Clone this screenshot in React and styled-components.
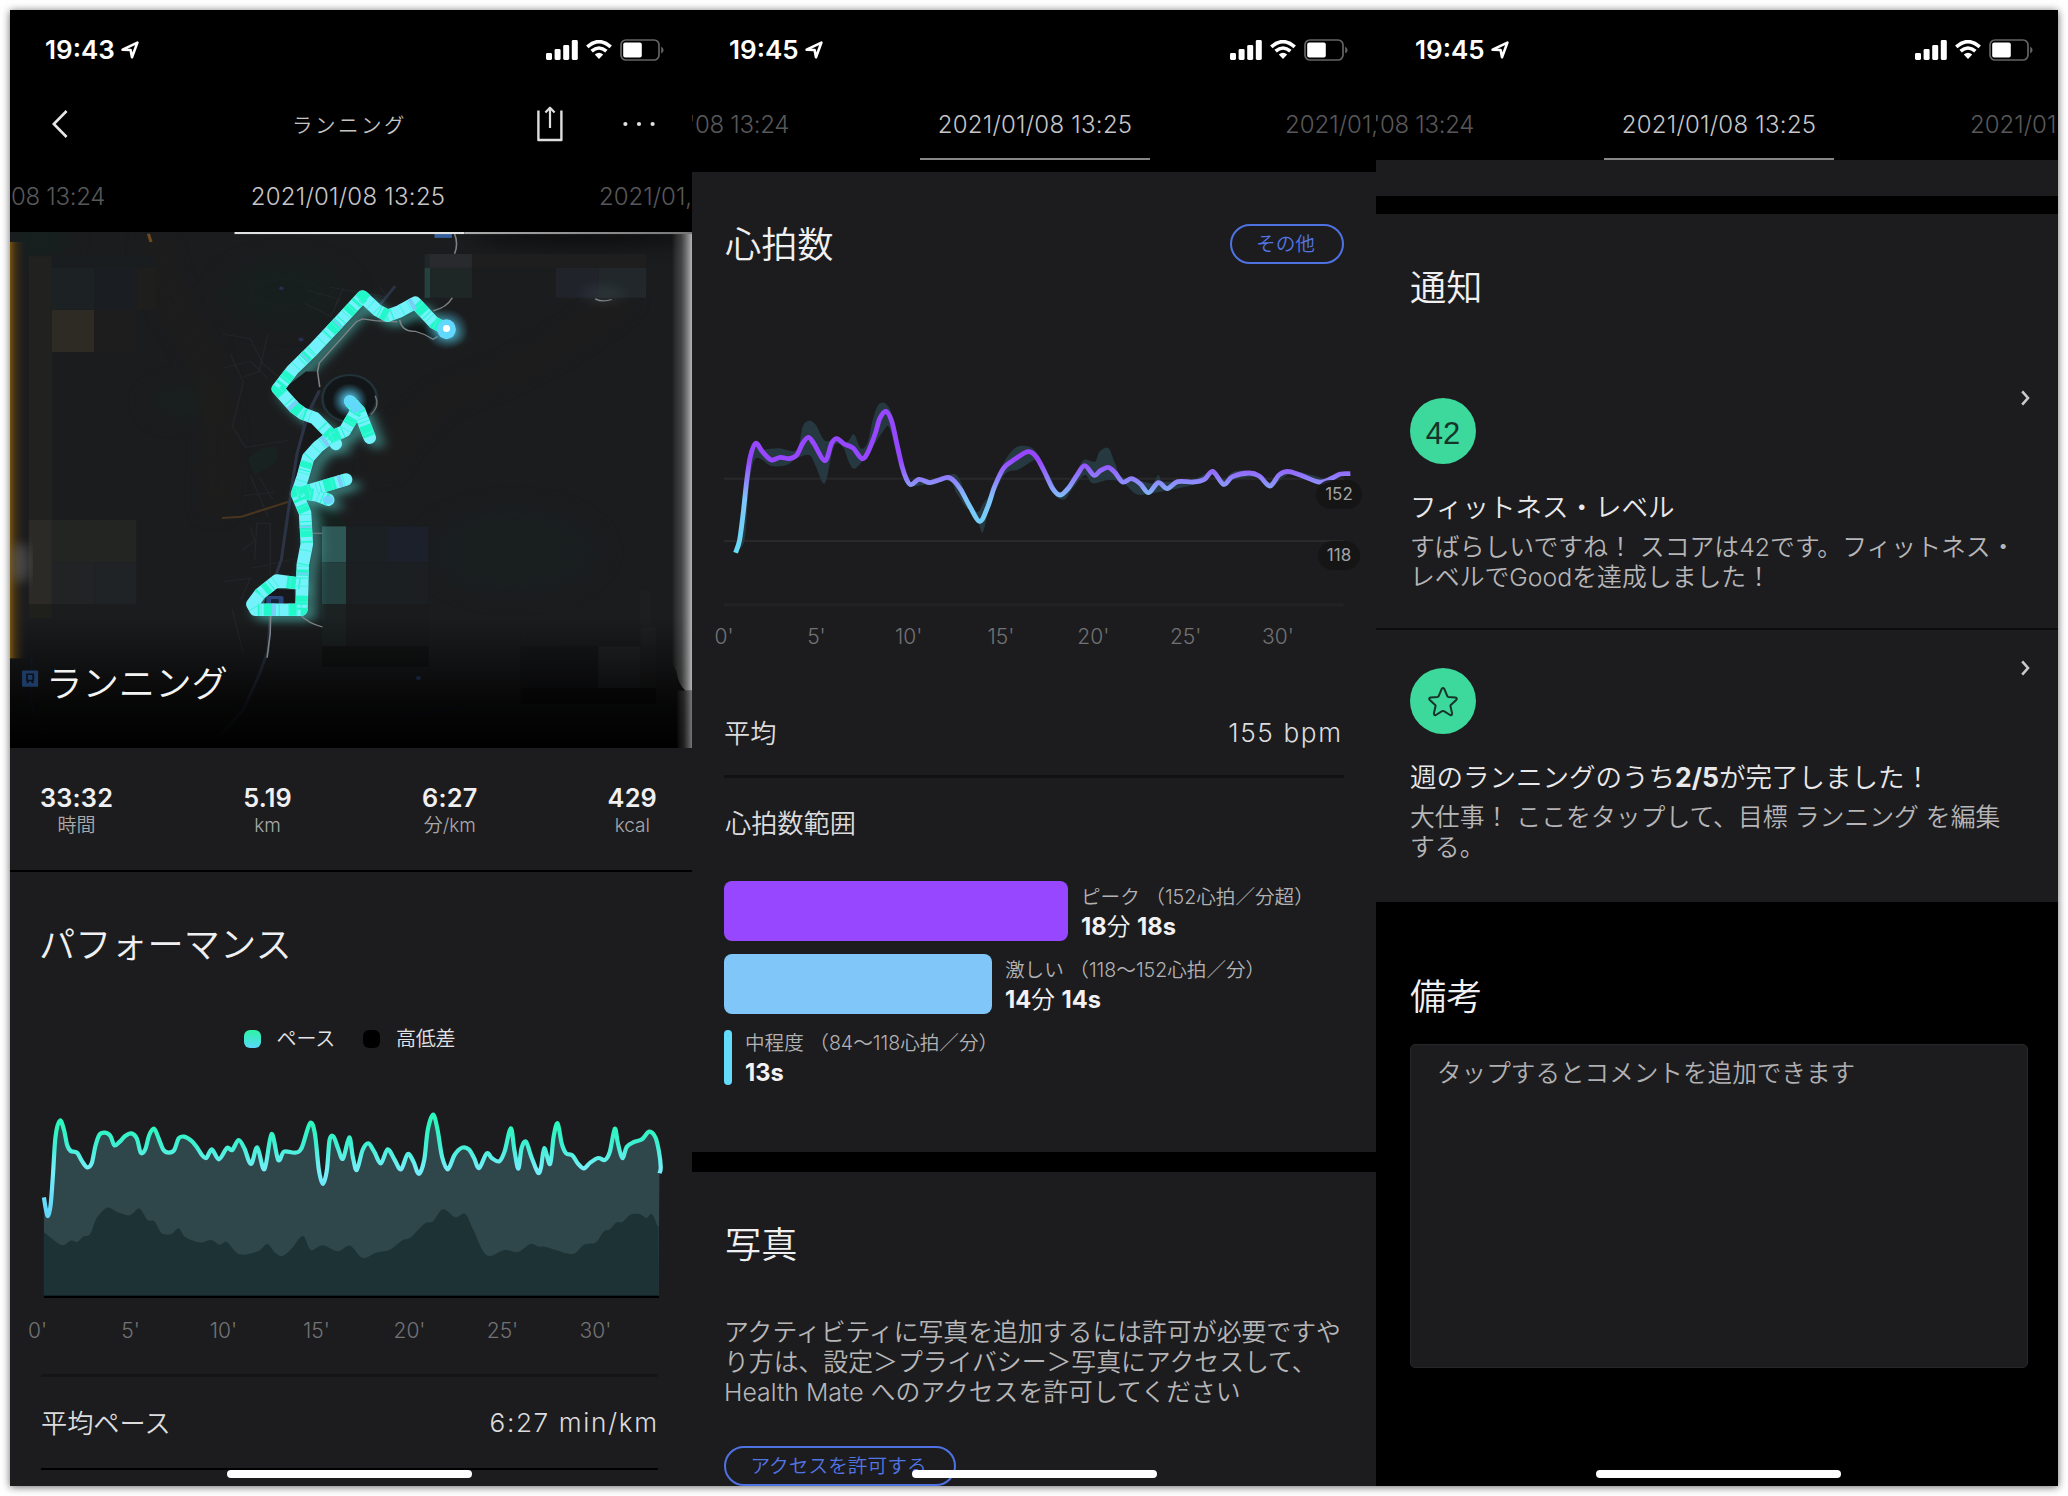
import React from "react";
import styled, { createGlobalStyle } from "styled-components";

const GlobalStyle = createGlobalStyle`
  * { box-sizing: border-box; }
  body {
    margin: 0;
    background: #fff;
    font-family: Inter, "Noto Sans CJK JP", sans-serif;
    font-weight: 350;
    color: #e9e9eb;
    -webkit-font-smoothing: antialiased;
  }
  p, h2, h3 { margin: 0; font-weight: inherit; }
`;

const Board = styled.main`
  display: flex;
  width: 2048px;
  height: 1476px;
  margin: 10px;
  background: #000;
  box-shadow: 0 1px 8px rgba(0, 0, 0, 0.6);
`;

const Screen = styled.section`
  position: relative;
  display: flex;
  flex-direction: column;
  width: ${(p) => p.$width}px;
  height: 1476px;
  overflow: hidden;
  background: #000;
`;

const StatusBar = styled.header`
  display: flex;
  flex: none;
  align-items: center;
  justify-content: space-between;
  height: 79px;
  padding: 0 ${(p) => p.$right}px 0 ${(p) => p.$left}px;
`;

const StatusGroup = styled.div`
  display: flex;
  align-items: center;
  gap: ${(p) => p.$gap}px;
`;

const Clock = styled.span`
  font-size: 26px;
  font-weight: 600;
  color: #fff;
`;

const NavBar = styled.nav`
  display: grid;
  grid-template-columns: 1fr auto 1fr;
  flex: none;
  align-items: center;
  height: 69px;
  padding: 0 37px 0 42px;
`;

const NavTitle = styled.span`
  margin-right: 8px;
  font-size: 20.5px;
  letter-spacing: 2.5px;
  color: #c4c4c4;
`;

const NavActions = styled.div`
  display: flex;
  align-items: center;
  justify-content: flex-end;
  gap: 60px;
`;

const TabRow = styled.div`
  display: flex;
  flex: none;
  height: 71px;
  margin-top: ${(p) => p.$offset || 0}px;
  line-height: 72px;
  font-size: 24px;
  white-space: nowrap;
  color: #58585a;
`;

const PreviousTab = styled.span`
  display: flex;
  flex: none;
  justify-content: flex-end;
  width: ${(p) => p.$width}px;
  letter-spacing: -0.3px;
`;

const CurrentTab = styled.span`
  flex: none;
  width: 230px;
  margin: 0 ${(p) => p.$after}px 0 ${(p) => p.$before}px;
  text-align: center;
  letter-spacing: 0.25px;
  color: #c6c6c8;
  box-shadow: ${(p) => (p.$underlined ? "inset 0 -2px #868688" : "none")};
`;

const NextTab = styled.span`
  flex: 1;
  min-width: 0;
`;

const MapArea = styled.div`
  position: relative;
  flex: none;
  height: 516px;
  background: #1b1c1e;
`;

const MapTitle = styled.h2`
  position: absolute;
  left: 36px;
  top: 428px;
  font-size: 36.4px;
  line-height: 48px;
  color: #f4f4f4;
`;

const Stats = styled.div`
  display: flex;
  flex: none;
  justify-content: space-between;
  height: 124px;
  padding: 35px 35px 0 30px;
  background: #1c1c1e;
  border-bottom: 2px solid #000;
`;

const Stat = styled.div`
  display: flex;
  flex-direction: column;
  align-items: center;
`;

const StatValue = styled.span`
  font-size: 25.3px;
  font-weight: 600;
  letter-spacing: 0.2px;
  line-height: 30px;
  color: #f0f0f2;
`;

const StatLabel = styled.span`
  font-size: 19px;
  line-height: 26px;
  color: #a9a9ab;
`;

const Section = styled.div`
  display: flex;
  flex-direction: column;
  flex: none;
  height: ${(p) => p.$height}px;
  padding: ${(p) => p.$pad};
  background: #1c1c1e;
`;

const SectionTitle = styled.h2`
  padding-top: 1px;
  margin: 0 0 -1px ${(p) => p.$shift || 0}px;
  font-size: 36.2px;
  line-height: 48px;
  color: #f0f0f2;
`;

const Legend = styled.div`
  display: flex;
  align-items: center;
  justify-content: center;
  gap: 28px;
  height: 24px;
  margin: 59px 34px 0 0;
`;

const LegendItem = styled.span`
  display: flex;
  align-items: center;
  gap: 16px;
  font-size: 20px;
  letter-spacing: -0.2px;
  line-height: 22px;
  color: #e4e4e6;
`;

const Swatch = styled.i`
  width: 17px;
  height: 18px;
  border-radius: 6px;
  background: ${(p) => p.$fill};
`;

const PaceChart = styled.svg`
  display: block;
  flex: none;
  width: 682px;
  height: 188px;
  margin: 59px 0 0 -31px;
`;

const AxisLabels = styled.div`
  display: grid;
  grid-template-columns: repeat(7, ${(p) => p.$pitch}px);
  flex: none;
  height: 24px;
  margin: ${(p) => p.$margin};
  font-size: 21px;
  line-height: 25px;
  text-align: center;
  color: #727274;
`;

const Divider = styled.hr`
  flex: none;
  width: 617px;
  height: 3px;
  margin: 32px 0 0;
  border: 0;
  background: #151516;
`;

const ValueRow = styled.div`
  display: flex;
  flex: none;
  align-items: center;
  justify-content: space-between;
  width: ${(p) => p.$width}px;
  height: ${(p) => p.$height}px;
  margin-top: ${(p) => p.$top || 0}px;
  padding: 0 ${(p) => p.$inset || 0}px 1px 0;
  border-bottom: ${(p) => p.$rule};
  font-size: 26.2px;
  color: #dcdcde;
`;

const Measure = styled.span`
  margin-right: -1.6px;
  letter-spacing: 1.6px;
`;

const HomeIndicator = styled.span`
  position: absolute;
  left: ${(p) => p.$left}px;
  bottom: 8px;
  width: 245px;
  height: 8px;
  border-radius: 4px;
  background: #fff;
`;

const HeadingRow = styled.div`
  display: flex;
  flex: none;
  align-items: center;
  justify-content: space-between;
  height: 40px;
`;

const PillButton = styled.button`
  flex: none;
  width: ${(p) => p.$width}px;
  height: 40px;
  margin-top: ${(p) => p.$top || 0}px;
  padding: 0 3px 0 0;
  border: 2px solid #4f72e2;
  border-radius: 20px;
  background: transparent;
  font: inherit;
  font-size: 19.7px;
  line-height: 36px;
  color: #5375e4;
`;

const HeartChartBox = styled.div`
  position: relative;
  flex: none;
  width: 652px;
  height: 210px;
  margin-top: 136px;
`;

const HeartChart = styled.svg`
  display: block;
  width: 652px;
  height: 210px;
`;

const ThresholdBadge = styled.span`
  position: absolute;
  left: ${(p) => 615 - p.$width / 2}px;
  top: ${(p) => p.$top}px;
  width: ${(p) => p.$width}px;
  height: 29px;
  border-radius: 15px;
  background: rgba(20, 20, 20, 0.86);
  font-size: 17px;
  font-weight: 400;
  line-height: 29px;
  text-align: center;
  color: #a3a3a5;
`;

const SubTitle = styled.h3`
  flex: none;
  margin: 28px 0 0 1px;
  font-size: 26.2px;
  line-height: 36px;
  color: #dcdcde;
`;

const ZoneList = styled.div`
  display: flex;
  flex-direction: column;
  gap: 13px;
  margin-top: 39px;
`;

const ZoneRow = styled.div`
  display: flex;
  align-items: center;
  gap: 13px;
  height: 60px;
`;

const ZoneBar = styled.i`
  flex: none;
  width: ${(p) => p.$width}px;
  height: ${(p) => p.$height}px;
  border-radius: ${(p) => p.$radius}px;
  background: ${(p) => p.$fill};
`;

const ZoneLabel = styled.p`
  font-size: 19.6px;
  line-height: 32px;
  white-space: nowrap;
  color: #b2b2b4;
`;

const ZoneTime = styled.p`
  font-size: 23.7px;
  line-height: 28px;
  white-space: nowrap;
  color: #f2f2f4;

  b { font-weight: 700; }
`;

const Band = styled.div`
  flex: none;
  height: ${(p) => p.$height}px;
  background: ${(p) => p.$fill || "#000"};
`;

const Paragraph = styled.p`
  flex: none;
  margin-top: ${(p) => p.$top}px;
  font-size: 24.85px;
  line-height: 30px;
  white-space: nowrap;
  color: #b6b6b8;
`;

const NoticeStack = styled.div`
  display: flex;
  flex-direction: column;
  margin-top: 49px;
`;

const NoticeCard = styled.article`
  display: flex;
  flex-direction: column;
  flex: none;
  height: ${(p) => p.$height}px;
  padding: 38px 28px 0 34px;
  border-bottom: ${(p) => (p.$ruled ? "2px solid #0c0c0d" : "0")};
`;

const NoticeHead = styled.div`
  display: flex;
  justify-content: space-between;
  align-items: flex-start;

  > svg { margin-top: -8px; }
`;

const NoticeBadge = styled.span`
  display: flex;
  align-items: center;
  justify-content: center;
  width: 66px;
  height: 66px;
  padding-top: ${(p) => p.$drop}px;
  border-radius: 50%;
  background: #3dd89b;
  font-family: "Liberation Sans", Arial, sans-serif;
  font-size: 31px;
  font-weight: 400;
  color: #17342a;
`;

const NoticeTitle = styled.h3`
  margin-top: 25px;
  font-size: 26.5px;
  line-height: 36px;
  white-space: nowrap;
  color: #e9e9eb;

  b { font-weight: 700; }
`;

const NotesTitle = styled(SectionTitle)`
  margin: 70px 0 -1px 34px;
`;

const NotesBox = styled.div`
  width: 618px;
  height: 324px;
  margin: 24px 0 0 34px;
  padding: 12px 26px;
  border: 1px solid #262628;
  border-radius: 5px;
  background: #1c1c1e;
  font-size: 24.6px;
  line-height: 32px;
  color: #b0b0b2;
`;

/* Catmull-Rom interpolation through a flat "x,y x,y" list. */
function smooth(list) {
  const p = list.trim().split(/\s+/).map((s) => s.split(",").map(Number));
  let d = `M${p[0][0]},${p[0][1]}`;
  for (let i = 0; i < p.length - 1; i += 1) {
    const a = p[i - 1] || p[i];
    const b = p[i];
    const c = p[i + 1];
    const e = p[i + 2] || c;
    const k = 6.2;
    d += `C${(b[0] + (c[0] - a[0]) / k).toFixed(1)},${(b[1] + (c[1] - a[1]) / k).toFixed(1)} ${(c[0] - (e[0] - b[0]) / k).toFixed(1)},${(c[1] - (e[1] - b[1]) / k).toFixed(1)} ${c[0]},${c[1]}`;
  }
  return d;
}

const PACE = smooth(`98,352 102,385 107,408 113,375 118,290 124,170 134,122 143,150 150,195 158,213 172,218 184,245 195,262
205,250 213,200 222,165 235,158 247,168 256,196 268,185 280,168 294,160 306,175 315,218 325,208 334,165 345,146 355,175
366,210 378,218 390,210 400,175 412,170 428,182 440,200 452,225 462,234 474,208 490,238 508,204 520,210 534,180 547,205
562,252 576,202 592,268 608,162 623,240 636,215 660,218 675,205 694,130 705,160 714,270 723,312 732,270 738,180 747,170
757,205 768,236 782,172 790,230 799,270 812,210 825,190 838,215 853,250 868,208 884,240 898,268 913,222 926,245 938,282
950,240 958,150 970,104 980,150 990,230 1003,268 1018,225 1035,203 1050,208 1062,235 1073,264 1090,220 1102,235 1118,244
1130,215 1144,145 1152,210 1161,266 1168,205 1178,185 1190,230 1205,278 1212,260 1219,204 1232,252 1240,170 1249,130
1258,190 1268,220 1282,226 1294,250 1308,265 1322,248 1340,234 1355,240 1366,215 1377,146 1384,190 1394,234 1404,200
1420,186 1438,178 1454,155 1468,172 1476,215 1480,262 1477,280`);

const ELEVATION = smooth(`98,456 120,480 140,496 158,482 172,486 186,470 202,462 216,415 240,383 262,396 290,406 312,386
330,420 345,424 362,460 384,462 400,445 415,472 448,488 472,480 492,494 508,486 536,523 578,514 598,492 616,518 632,528
652,508 678,468 696,510 722,496 756,514 784,497 812,534 842,518 872,510 900,482 920,472 950,432 970,424 992,388 1020,412
1042,402 1060,450 1090,526 1130,510 1160,516 1188,492 1206,500 1220,500 1250,512 1284,522 1308,494 1334,488 1352,455
1366,448 1380,428 1394,426 1412,404 1432,402 1448,414 1460,402 1472,436 1475,440`);

const HEART = smooth(`125,578 134,540 142,460 150,360 158,290 170,250 185,275 205,300 225,292 245,296 262,285 275,250
288,232 300,250 325,302 340,250 352,236 368,252 388,264 408,296 422,275 438,220 448,175 462,154 475,185 486,250 498,320
508,358 518,374 536,358 560,368 580,360 600,352 614,362 630,390 650,440 672,484 690,440 705,380 725,325 750,298 780,275
798,290 815,330 835,385 852,405 870,385 890,345 907,317 928,346 942,332 960,322 975,338 992,366 1012,356 1032,372
1050,398 1072,368 1092,386 1115,365 1150,366 1175,358 1194,334 1218,373 1238,350 1275,339 1298,348 1322,378 1342,345
1362,334 1390,345 1432,366 1460,355 1480,342 1502,341`);

const HEART_RANGE = smooth(`125,575 150,330 165,248 185,268 222,265 262,270 275,200 290,182 305,195 325,242 352,236 375,245
390,223 405,265 420,250 432,180 445,134 462,132 478,175 500,320 518,370 600,345 622,348 640,400 665,455 680,430 705,380
725,310 750,265 775,258 798,275 830,350 852,400 885,345 905,300 930,305 940,275 960,264 975,310 990,350 1040,365
1060,370 1072,345 1085,365 1150,358 1194,332 1218,358 1240,335 1275,333 1300,345 1322,365 1362,332 1440,355 1440,375
1400,358 1362,345 1322,382 1300,352 1240,360 1218,380 1194,345 1150,374 1095,390 1050,402 1022,402 992,368 960,360
925,370 907,345 880,385 862,418 840,405 815,340 798,300 760,328 730,340 705,400 690,460 678,518 665,475 640,440 620,400
600,362 518,378 495,330 470,205 455,215 430,265 395,324 380,310 365,260 345,260 325,370 305,320 290,285 262,295 240,315
205,318 170,295 155,380 145,540 125,575`);

const ROUTE =
  "M1000,317 L972,298 L930,240 L895,265 L868,278 L845,262 L812,222 L760,295 L700,378 L655,435 L622,490 L660,545 L678,562 L705,575 L735,615 L752,650" +
  " M785,528 L805,555 L828,632 M797,556 L772,612 L738,632 L712,658 L690,690 L678,745 L665,795 L683,850 L687,940 L678,1000 L675,1131 L572,1131 L565,1115 L582,1085 L620,1046 L672,1055" +
  " M665,795 L775,753 M668,790 L712,800 L735,812";

const BLOCKS = [
  [64, 105, 52, 765, "#21221f"], [64, 1115, 52, 42, "#1f1f1c"], [116, 105, 232, 33, "#191d1f"], [116, 138, 95, 123, "#1c2123"],
  [211, 138, 94, 123, "#1a1d22"], [116, 261, 95, 122, "#2e2a24"], [305, 138, 44, 123, "#1e1e1d"], [211, 261, 94, 122, "#1d1d1d"],
  [64, 870, 52, 245, "#2c2a26"], [116, 870, 189, 123, "#232523"], [116, 993, 95, 122, "#212325"], [211, 993, 94, 122, "#202325"],
  [951, 99, 106, 127, "#1f2726"], [962, 99, 95, 40, "#292a2d"], [951, 139, 12, 87, "#22413f"], [1057, 99, 390, 40, "#1e1e1e"],
  [1245, 139, 95, 87, "#20232a"], [1340, 139, 107, 87, "#21272a"],
  [721, 889, 54, 104, "#2e5856"], [775, 889, 94, 104, "#1b2023"], [869, 889, 90, 104, "#1c202a"],
  [721, 993, 54, 122, "#233f3e"], [775, 993, 184, 122, "#1b1f21"], [721, 1115, 54, 122, "#1b2221"], [775, 1115, 184, 122, "#191b1d"],
  [721, 1237, 239, 60, "#131415"], [1228, 1115, 206, 122, "#1a1c1e"], [1166, 1180, 80, 57, "#1a1d1e"], [1434, 1075, 26, 104, "#1d1e20"],
  [1434, 1180, 35, 57, "#1f2022"], [1166, 1237, 174, 121, "#17181a"], [1340, 1237, 94, 121, "#222325"], [1434, 1237, 35, 121, "#1e1f21"],
  [1166, 1358, 303, 46, "#101010"],
];

function StreetMap() {
  return (
    <svg width="682" height="516" viewBox="22 35 1528 1497" preserveAspectRatio="none" display="block">
      <defs>
        <linearGradient id="fade" x1="0" y1="0" x2="0" y2="1">
          <stop offset="0" stopColor="#000" stopOpacity="0" />
          <stop offset="0.32" stopColor="#000" stopOpacity="0.35" />
          <stop offset="0.65" stopColor="#000" stopOpacity="0.75" />
          <stop offset="1" stopColor="#000" />
        </linearGradient>
        <linearGradient id="amber">
          <stop offset="0" stopColor="#76530f" />
          <stop offset="0.3" stopColor="#4a3613" stopOpacity="0.8" />
          <stop offset="1" stopColor="#1b1c1e" stopOpacity="0" />
        </linearGradient>
        <linearGradient id="edge">
          <stop offset="0" stopColor="#aaa" stopOpacity="0" />
          <stop offset="0.45" stopColor="#888" stopOpacity="0.35" />
          <stop offset="1" stopColor="#b4b4b4" />
        </linearGradient>
        <linearGradient id="topline">
          <stop offset="0" stopColor="#aaa" />
          <stop offset="1" stopColor="#777" />
        </linearGradient>
        <radialGradient id="halo">
          <stop offset="0" stopColor="#5fd9ff" />
          <stop offset="0.45" stopColor="#4fb8da" stopOpacity="0.65" />
          <stop offset="1" stopColor="#3a8aa8" stopOpacity="0" />
        </radialGradient>
        <filter id="soft" x="-20%" y="-20%" width="140%" height="140%" colorInterpolationFilters="sRGB">
          <feGaussianBlur stdDeviation="14" />
        </filter>
        <filter id="wide" x="-50%" y="-50%" width="200%" height="200%" colorInterpolationFilters="sRGB">
          <feGaussianBlur stdDeviation="28" />
        </filter>
      </defs>
      <rect x="22" y="35" width="1528" height="1497" fill="#1b1c1e" />
      <g filter="url(#wide)" opacity="0.8">
        <ellipse cx="640" cy="210" rx="140" ry="100" fill="#17201e" />
        <ellipse cx="90" cy="60" rx="60" ry="40" fill="#13231f" />
        <path d="M345,60 Q370,230 430,340 Q510,480 480,850" stroke="#241f19" strokeWidth="28" fill="none" />
        <path d="M1400,230 Q1200,430 1000,510 Q900,600 850,730" stroke="#221e19" strokeWidth="28" fill="none" />
        <ellipse cx="400" cy="530" rx="60" ry="50" fill="#18201f" />
        <ellipse cx="1150" cy="960" rx="190" ry="130" fill="#191f20" />
        <ellipse cx="1310" cy="45" rx="260" ry="25" fill="#060606" />
      </g>
      {BLOCKS.map(([x, y, w, h, fill]) => (
        <rect key={`${x}-${y}-${w}`} x={x} y={y} width={w} height={h} fill={fill} />
      ))}
      <g fill="none" stroke="#232528" strokeWidth="3">
        <path d="M497,330 L560,345 L590,420 L640,470 M515,390 L545,470 L520,600 L550,660 L645,640 M600,330 L580,440 L545,455 M497,430 L560,410 L600,460" />
        <path d="M560,740 L600,860 M580,745 L610,810 M545,800 L615,790 M540,960 L570,930 L560,890 M565,1010 L655,985 M500,1050 L560,1040 L540,1100 M520,1130 L545,1260 M570,985 L575,880 L605,880 L605,1030" />
        <path d="M690,205 L760,230 L740,280 L680,240 M740,195 L870,225 L850,195 M770,195 L750,250 M800,200 L850,250" />
      </g>
      <path d="M555,690 L590,660 L622,658 L620,700 L570,742 Z" fill="#182321" />
      <path d="M697,820 L735,822 L775,885 L720,889 L697,915 Z" fill="#15211f" />
      <path d="M497,865 L540,861 L645,818" fill="none" stroke="#49341f" strokeWidth="6" />
      <path d="M332,40 L338,64" stroke="#704a1f" strokeWidth="7" />
      <path d="M885,192 L845,255 M715,495 L690,560 L665,680 L645,850 L630,985 L618,1030 M605,1145 L600,1250 L580,1320 L545,1420 L490,1500" fill="none" stroke="#2b3345" strokeWidth="7" />
      <path d="M70,1270 L70,1400 Q75,1460 110,1500" fill="none" stroke="#182336" strokeWidth="5" />
      <path d="M885,285 L925,250 L980,335 L965,345 L935,325 L905,318 Z" fill="#0f1112" />
      <path d="M880,1460 Q930,1425 1038,1415" fill="none" stroke="#161c2c" strokeWidth="6" />
      <rect x="22" y="1150" width="1528" height="382" fill="url(#fade)" />
      <ellipse cx="1352" cy="215" rx="45" ry="28" fill="#53606a" opacity="0.2" filter="url(#soft)" />
      <rect x="22" y="64" width="38" height="1208" fill="url(#amber)" />
      <ellipse cx="45" cy="995" rx="20" ry="60" fill="#777" opacity="0.5" filter="url(#soft)" />
      <circle cx="937" cy="1329" r="6" fill="#152039" />
      <circle cx="630" cy="198" r="5" fill="#242f52" />
      <circle cx="674" cy="347" r="6" fill="#242f52" />
      <rect x="49" y="1307" width="36" height="47" rx="2" fill="#1d3a63" />
      <path d="M60,1318 h14 v18 h-14 z M60,1344 l4,-7 M74,1344 l-4,-7" fill="none" stroke="#0b111c" strokeWidth="4" />
      <path d={ROUTE} transform="translate(16 18)" fill="none" stroke="#4cb9b2" strokeWidth="26" strokeLinecap="round" strokeLinejoin="round" opacity="0.75" filter="url(#soft)" />
      <path d="M636,488 L685,440 L712,440 L716,485 L690,565 L662,540 Z M690,580 L662,690 L655,770 L668,770 L676,700 L725,625 L704,585 Z" fill="#16181a" />
      <path d="M600,1070 L660,1072 L660,1118 L590,1118 Z" fill="#16181b" />
      <path d="M715,495 L690,560 L665,680 L650,800" fill="none" stroke="#2b3345" strokeWidth="7" />
      <ellipse cx="783" cy="518" rx="61" ry="68" fill="#131618" stroke="#223238" strokeWidth="6" />
      <path d="M840,510 Q852,540 830,565" fill="none" stroke="#6b7072" strokeWidth="3" />
      <path d="M1018,40 Q1027,70 1018,98 M1013,226 Q1000,255 970,264 M890,296 L840,292 L812,287 L798,295 L715,415 L711,440 L716,485 M895,290 Q900,325 930,323 Q950,330 970,346 L980,338 M700,909 L722,909 M610,1145 L672,1145 Q690,1170 722,1181 M606,1145 L605,1200 L598,1270 M1333,229 Q1350,240 1370,231" fill="none" stroke="#7d8284" strokeWidth="3.5" />
      <ellipse cx="783" cy="524" rx="40" ry="50" fill="url(#halo)" />
      <rect x="596" y="1091" width="39" height="40" rx="5" fill="#294579" />
      <rect x="607" y="1100" width="17" height="16" fill="#142035" />
      <ellipse cx="1000" cy="317" rx="50" ry="60" fill="url(#halo)" opacity="0.8" />
      <g fill="none" strokeLinejoin="round" strokeWidth="12">
        <path d={ROUTE} stroke="#74f2fb" strokeWidth="12.5" strokeLinecap="round" vectorEffect="non-scaling-stroke" />
        <path d={ROUTE} stroke="#22f7c9" strokeDasharray="3 4 8 9 1 3 12 4 2 21 1 5 6 2 1 17 9 3" vectorEffect="non-scaling-stroke" />
        <path d={ROUTE} stroke="#45f4dc" strokeDasharray="1 11 1 7 1 15" vectorEffect="non-scaling-stroke" />
        <path d={ROUTE} stroke="#79cef8" strokeDasharray="2 61 4 93 2 45" strokeDashoffset="20" vectorEffect="non-scaling-stroke" />
      </g>
      <ellipse cx="735" cy="812" rx="12" ry="12" fill="#6fd2fb" />
      <ellipse cx="1000" cy="317" rx="21" ry="29" fill="#63d8ff" />
      <ellipse cx="1000" cy="315" rx="8" ry="10" fill="#fff" />
      <ellipse cx="783" cy="525" rx="13" ry="17" fill="#62d9fa" />
      <path d="M790,530 L803,556" stroke="#62d9fa" strokeWidth="26" />
      <path d="M1505,35 H1550 V1365 H1535 Q1520,1350 1515,1310 L1505,1285 Z" fill="url(#edge)" />
      <rect x="1515" y="1365" width="35" height="167" fill="url(#edge)" opacity="0.65" />
      <rect x="973" y="38" width="39" height="14" fill="#365f9e" />
      <rect x="525" y="35" width="515" height="6" fill="#e2e2e2" />
      <rect x="1040" y="35" width="510" height="6" fill="url(#topline)" />
    </svg>
  );
}

function PaceGraph() {
  return (
    <PaceChart viewBox="22 90 1528 564" preserveAspectRatio="none">
      <defs>
        <linearGradient id="pace" gradientUnits="userSpaceOnUse" x1="0" y1="104" x2="0" y2="400">
          <stop offset="0.1" stopColor="#2cf8bd" />
          <stop offset="0.3" stopColor="#3ef0d2" />
          <stop offset="0.55" stopColor="#74eff8" />
          <stop offset="1" stopColor="#62d6fb" />
        </linearGradient>
      </defs>
      <path d={`${PACE} L1475,648 L98,648 Z`} fill="#2f464a" />
      <path d={`${ELEVATION} L1475,648 L98,648 Z`} fill="#1c3234" />
      <rect x="98" y="647" width="1378" height="7" fill="#000" />
      <path d={PACE} fill="none" stroke="url(#pace)" strokeWidth="4.2" strokeLinejoin="round" vectorEffect="non-scaling-stroke" />
    </PaceChart>
  );
}

function HeartGraph() {
  return (
    <HeartChart viewBox="99 120 1460.5 630" preserveAspectRatio="none">
      <defs>
        <linearGradient id="heart" gradientUnits="userSpaceOnUse" x1="0" y1="300" x2="0" y2="578">
          <stop offset="0" stopColor="#9747ff" />
          <stop offset="0.22" stopColor="#8f86fb" />
          <stop offset="0.42" stopColor="#7fc4fb" />
          <stop offset="1" stopColor="#67dcf7" />
        </linearGradient>
      </defs>
      <path d="M99,356 H1487 M99,543 H1487" stroke="#29292b" strokeWidth="2" vectorEffect="non-scaling-stroke" />
      <path d="M99,734 H1487" stroke="#222224" strokeWidth="3" vectorEffect="non-scaling-stroke" />
      <path d={`${HEART_RANGE} Z`} fill="#263840" />
      <path d={HEART} fill="none" stroke="url(#heart)" strokeWidth="4.8" strokeLinejoin="round" vectorEffect="non-scaling-stroke" />
    </HeartChart>
  );
}

const LocationArrow = () => (
  <svg width="18" height="18" viewBox="0 0 18 18">
    <path d="M1.6,8.6 L16.4,1.6 L11,16.2 L9.6,9 Z" fill="none" stroke="#fff" strokeWidth="2.6" strokeLinejoin="round" />
  </svg>
);

const SignalBars = () => (
  <svg width="32" height="20" viewBox="0 0 32 20" fill="#fff">
    <rect x="0" y="13" width="6" height="7" rx="1.4" />
    <rect x="8.6" y="9" width="6" height="11" rx="1.4" />
    <rect x="17.2" y="5" width="6" height="15" rx="1.4" />
    <rect x="25.8" y="0" width="6" height="20" rx="1.4" />
  </svg>
);

const WifiMark = () => (
  <svg width="26" height="19" viewBox="0 0 26 19" fill="none" stroke="#fff" strokeWidth="3.6">
    <path d="M1.3,6.9 Q13,-3.6 24.7,6.9" />
    <path d="M5.6,11.2 Q13,4.8 20.4,11.2" />
    <path d="M13,19 L8.8,14.5 Q13,11 17.2,14.5 Z" fill="#fff" stroke="none" />
  </svg>
);

const Battery = () => (
  <svg width="44" height="22" viewBox="0 0 44 22">
    <rect x="1" y="1" width="38" height="20" rx="5" fill="none" stroke="#646464" strokeWidth="1.7" />
    <path d="M41.2,7.5 Q43.6,9 43.6,11 Q43.6,13 41.2,14.5 Z" fill="#646464" />
    <rect x="3.2" y="3.6" width="18.6" height="14.8" rx="2" fill="#fff" />
  </svg>
);

const BackChevron = () => (
  <svg width="16" height="28" viewBox="0 0 16 28" fill="none" stroke="#e8e8e8" strokeWidth="2.6">
    <path d="M14.6,1 L1.8,14 L14.6,27" />
  </svg>
);

const ShareMark = () => (
  <svg width="26" height="36" viewBox="0 0 26 36" fill="none" stroke="#dedede" strokeWidth="2.4" strokeLinejoin="round">
    <path d="M1.4,4.5 V34 H24.4 V4.5" />
    <path d="M13,22 V2 M8.4,6.6 L13,1.7 L17.6,6.6" strokeWidth="2.2" />
  </svg>
);

const MoreDots = () => (
  <svg width="32" height="6" viewBox="0 0 32 6" fill="#e0e0e0">
    <circle cx="2.4" cy="3" r="2.1" />
    <circle cx="16" cy="3" r="2.1" />
    <circle cx="29.6" cy="3" r="2.1" />
  </svg>
);

const RowChevron = () => (
  <svg width="9" height="16" viewBox="0 0 9 16" fill="none" stroke="#c9c9cb" strokeWidth="2.6">
    <path d="M1.2,1.3 L7,8 L1.2,14.7" />
  </svg>
);

const StarMark = () => (
  <svg width="30" height="30" viewBox="0 0 30 30" fill="none" stroke="#17342a" strokeWidth="2" strokeLinejoin="round">
    <path d="M13.7,1.9 Q15,0 16.3,1.9 L19.4,9.3 Q19.7,9.9 20.5,10 L27.4,10.6 Q29.6,11 28.2,12.9 L22.8,18 Q22.3,18.6 22.5,19.3 L24.1,26.4 Q24.2,28.7 22.1,28 L15.9,24.2 Q15,23.8 14.1,24.2 L7.9,28 Q5.8,28.7 5.9,26.4 L7.5,19.3 Q7.7,18.6 7.2,18 L1.8,12.9 Q0.4,11 2.6,10.6 L9.5,10 Q10.3,9.9 10.6,9.3 Z" />
  </svg>
);

function Status({ time, left, right }) {
  return (
    <StatusBar $left={left} $right={right}>
      <StatusGroup $gap={6}>
        <Clock>{time}</Clock>
        <LocationArrow />
      </StatusGroup>
      <StatusGroup $gap={8}>
        <SignalBars />
        <WifiMark />
        <Battery />
      </StatusGroup>
    </StatusBar>
  );
}

function DateTabs({ prev, next, width, before, after, underlined, offset }) {
  return (
    <TabRow $offset={offset}>
      <PreviousTab $width={width}>{prev}</PreviousTab>
      <CurrentTab $before={before} $after={after} $underlined={underlined}>2021/01/08 13:25</CurrentTab>
      <NextTab>{next}</NextTab>
    </TabRow>
  );
}

const STATS = [
  ["33:32", "時間"],
  ["5.19", "km"],
  ["6:27", "分/km"],
  ["429", "kcal"],
];

const MINUTES = ["0'", "5'", "10'", "15'", "20'", "25'", "30'"];

const Minutes = ({ pitch, margin }) => (
  <AxisLabels $pitch={pitch} $margin={margin}>
    {MINUTES.map((m) => <span key={m}>{m}</span>)}
  </AxisLabels>
);

function ActivityScreen() {
  return (
    <Screen $width={682}>
      <Status time="19:43" left={35} right={28} />
      <NavBar>
        <BackChevron />
        <NavTitle>ランニング</NavTitle>
        <NavActions>
          <ShareMark />
          <MoreDots />
        </NavActions>
      </NavBar>
      <DateTabs prev="08 13:24" next="2021/01," width={95} before={128} after={136} offset={3} />
      <MapArea>
        <StreetMap />
        <MapTitle>ランニング</MapTitle>
      </MapArea>
      <Stats>
        {STATS.map(([value, label]) => (
          <Stat key={label}>
            <StatValue>{value}</StatValue>
            <StatLabel>{label}</StatLabel>
          </Stat>
        ))}
      </Stats>
      <Section $height={614} $pad="48px 0 0 31px">
        <SectionTitle $shift={-2}>パフォーマンス</SectionTitle>
        <Legend>
          <LegendItem><Swatch $fill="linear-gradient(#2cf5a4, #58d8f8)" />ペース</LegendItem>
          <LegendItem><Swatch $fill="#000" />高低差</LegendItem>
        </Legend>
        <PaceGraph />
        <Minutes pitch={93} margin="20px 0 0 -50px" />
        <Divider />
        <ValueRow $width={617} $height={93} $inset={1} $rule="2px solid #000">
          <span>平均ペース</span>
          <Measure>6:27 min/km</Measure>
        </ValueRow>
      </Section>
      <HomeIndicator $left={217} />
    </Screen>
  );
}

const ZONES = [
  { width: 344, height: 60, radius: 8, fill: "#9747ff", label: "ピーク （152心拍／分超）", time: [["18", "分 "], ["18s", ""]] },
  { width: 268, height: 60, radius: 8, fill: "#80c6f9", label: "激しい （118〜152心拍／分）", time: [["14", "分 "], ["14s", ""]] },
  { width: 8, height: 55, radius: 4, fill: "#63dcfb", label: "中程度 （84〜118心拍／分）", time: [["13s", ""]] },
];

function HeartScreen() {
  return (
    <Screen $width={684}>
      <Status time="19:45" left={37} right={28} />
      <DateTabs prev="'08 13:24" next="2021/01," width={97} before={131} after={135} underlined />
      <Band $height={12} />
      <Section $height={980} $pad="52px 32px 0 32px">
        <HeadingRow>
          <SectionTitle $shift={1}>心拍数</SectionTitle>
          <PillButton $width={114}>その他</PillButton>
        </HeadingRow>
        <HeartChartBox>
          <HeartGraph />
          <ThresholdBadge $top={80} $width={46}>152</ThresholdBadge>
          <ThresholdBadge $top={141} $width={42}>118</ThresholdBadge>
        </HeartChartBox>
        <Minutes pitch={92.3} margin="14px 0 0 -46px" />
        <ValueRow $width={620} $height={88} $top={42} $inset={3} $rule="3px solid #111112">
          <span>平均</span>
          <Measure>155 bpm</Measure>
        </ValueRow>
        <SubTitle>心拍数範囲</SubTitle>
        <ZoneList>
          {ZONES.map((z) => (
            <ZoneRow key={z.label}>
              <ZoneBar $width={z.width} $height={z.height} $radius={z.radius} $fill={z.fill} />
              <div>
                <ZoneLabel>{z.label}</ZoneLabel>
                <ZoneTime>
                  {z.time.map(([n, unit]) => <React.Fragment key={n + unit}><b>{n}</b>{unit}</React.Fragment>)}
                </ZoneTime>
              </div>
            </ZoneRow>
          ))}
        </ZoneList>
      </Section>
      <Band $height={20} />
      <Section $height={314} $pad="48px 32px 0 32px">
        <SectionTitle $shift={1}>写真</SectionTitle>
        <Paragraph $top={49}>
          アクティビティに写真を追加するには許可が必要ですや<br />
          り方は、設定＞プライバシー＞写真にアクセスして、<br />
          Health Mate へのアクセスを許可してください
        </Paragraph>
        <PillButton $width={232} $top={39}>アクセスを許可する</PillButton>
      </Section>
      <HomeIndicator $left={220} />
    </Screen>
  );
}

function NoticeScreen() {
  return (
    <Screen $width={682}>
      <Status time="19:45" left={39} right={25} />
      <DateTabs prev="'08 13:24" next="2021/01" width={98} before={130} after={136} underlined />
      <Band $height={36} $fill="#1c1c1e" />
      <Band $height={18} />
      <Section $height={688} $pad="49px 0 0 0">
        <SectionTitle $shift={34}>通知</SectionTitle>
        <NoticeStack>
          <NoticeCard $height={270} $ruled>
            <NoticeHead>
              <NoticeBadge $drop={5}>42</NoticeBadge>
              <RowChevron />
            </NoticeHead>
            <NoticeTitle>フィットネス・レベル</NoticeTitle>
            <Paragraph $top={7}>
              すばらしいですね！ スコアは42です。フィットネス・<br />
              レベルでGoodを達成しました！
            </Paragraph>
          </NoticeCard>
          <NoticeCard $height={272}>
            <NoticeHead>
              <NoticeBadge $drop={2}><StarMark /></NoticeBadge>
              <RowChevron />
            </NoticeHead>
            <NoticeTitle>週のランニングのうち<b>2/5</b>が完了しました！</NoticeTitle>
            <Paragraph $top={7}>
              大仕事！ ここをタップして、目標 ランニング を編集<br />
              する。
            </Paragraph>
          </NoticeCard>
        </NoticeStack>
      </Section>
      <NotesTitle>備考</NotesTitle>
      <NotesBox>タップするとコメントを追加できます</NotesBox>
      <HomeIndicator $left={220} />
    </Screen>
  );
}

export default function App() {
  return (
    <>
      <GlobalStyle />
      <Board>
        <ActivityScreen />
        <HeartScreen />
        <NoticeScreen />
      </Board>
    </>
  );
}
